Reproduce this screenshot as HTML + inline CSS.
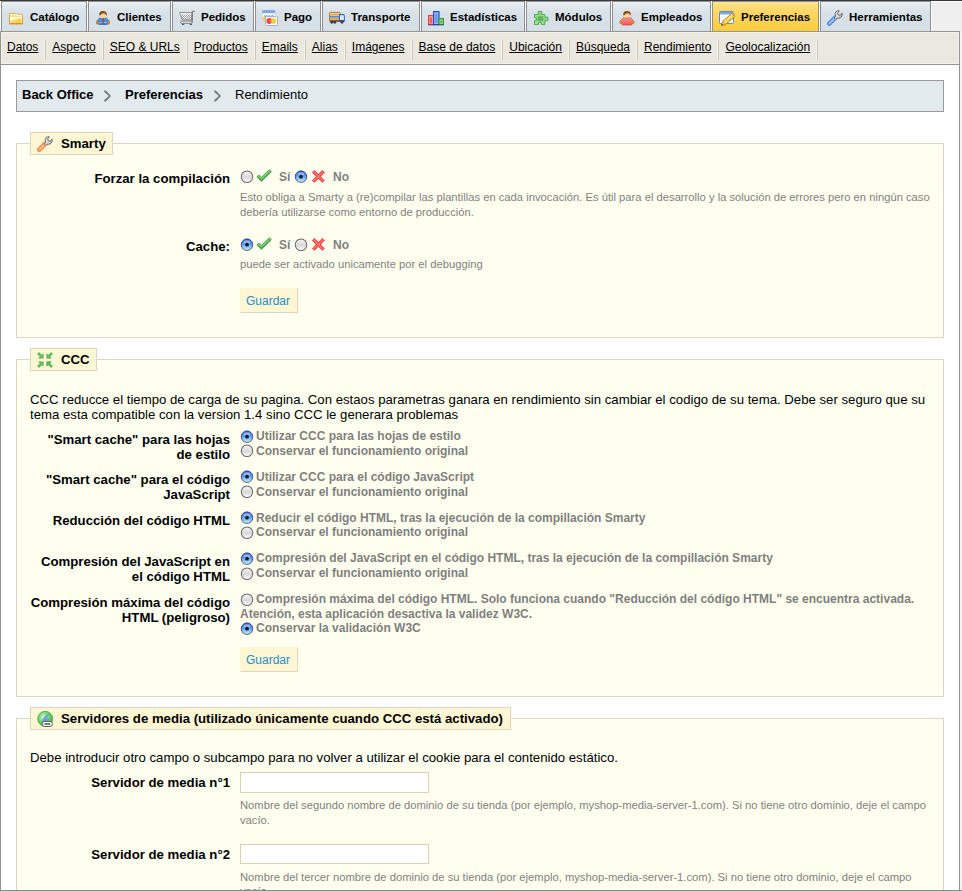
<!DOCTYPE html>
<html><head><meta charset="utf-8">
<style>
*{box-sizing:border-box}
html,body{margin:0;padding:0}
body{width:962px;height:891px;overflow:hidden;position:relative;background:#efefef;font-family:"Liberation Sans",sans-serif;color:#000}
.a{position:absolute}
#topline{left:0;top:0;width:962px;height:1px;background:#3a3a3a}
#tabrow{left:0;top:1px;width:962px;height:1px;background:#fff}
#tabwhite{left:0;top:1px;width:932px;height:30px;background:#fff}
.tab{position:absolute;top:1px;height:30px;border:1px solid #8f8f8f;border-bottom:0;background:linear-gradient(#eef3f6 0px,#e2e9ee 4px,#d7e1e7 12px,#d5e0e6 30px)}
.tab.on{background:linear-gradient(#fde590 0px,#fdd86a 8px,#fecd38 30px);border-color:#8f8f8f}
.tab svg{position:absolute;left:6px;top:8px}
.tab span{position:absolute;left:28px;top:8px;font-size:11.5px;font-weight:bold;line-height:14px;white-space:nowrap}
#sub{left:0;top:31px;width:960px;height:34px;border:1px solid #959595;background:#ebe9df;box-shadow:inset 1px 1px 0 #f4f2e8,inset -1px -1px 0 #f4f2e8}
#sub ul{margin:0;padding:0;list-style:none;position:absolute;left:0;top:0;white-space:nowrap}
#sub li{float:left;padding:0 7px 0 6px;border-right:1px solid #c8c6be;box-shadow:-1px 0 0 #f5f3ea inset;margin-top:8px;height:20px;font-size:12px;line-height:15px;padding-top:0px}
#sub li:last-child{}
#sub a{color:#000;text-decoration:underline}
#content{left:0;top:65px;width:960px;height:826px;border-left:1px solid #939393;border-right:1px solid #939393;background:#fff}
#bottomline{left:0;top:890px;width:962px;height:1px;background:#8a8a8a}
#rstrip{left:960px;top:32px;width:1px;height:858px;background:#f5f5f5}
#path{left:16px;top:80px;width:928px;height:32px;border:1px solid #9a9a9a;background:#e2eaee;font-size:13px;line-height:16px}
#path span{position:absolute;top:6px;white-space:nowrap}
fieldset.f{position:absolute;left:16px;width:928px;margin:0;padding:0;border:1px solid #dfd5c3;background:#fffff0}
.lg{position:absolute;left:30px;height:23px;border:1px solid #dfd5c3;background:#fff6d3;font-size:13.2px;font-weight:bold;line-height:16px}
.lg svg{position:absolute;left:6px;top:3px}
.lg span{position:absolute;left:30px;top:3px;white-space:nowrap}
.lbl{position:absolute;left:30px;width:200px;text-align:right;font-size:13.2px;font-weight:bold;line-height:15px;white-space:nowrap}
.desc{position:absolute;left:240px;font-size:11.22px;color:#7f7f7f;line-height:15px;white-space:nowrap}
.opt{position:absolute;left:256px;font-size:12px;font-weight:bold;color:#7f7f7f;line-height:15px;white-space:nowrap}
.yn{position:absolute;font-size:12px;font-weight:bold;color:#7f7f7f;line-height:15px}
.txt{position:absolute;left:30px;font-size:13.2px;line-height:15px;white-space:nowrap}
.rd{position:absolute;width:14px;height:14px}
.rd svg{display:block}
.btn{position:absolute;left:240px;width:58px;height:25px;background:#fff6d3;border:1px solid;border-color:#fff6d3 #dfd5c3 #dfd5c3 #fff6d3;color:#268ccd;font-size:12px;line-height:15px}
.btn span{position:absolute;left:5px;top:5px}
.inp{position:absolute;left:240px;width:189px;height:21px;border:1px solid #e0d0b1;background:#fff}
.ic{position:absolute}
</style></head><body>
<div class="a" id="topline"></div>
<div class="a" id="tabwhite"></div><div class="a" id="tabrow"></div>

<div class="tab" style="left:1px;width:86px"><svg width="16" height="16" viewBox="0 0 16 16"><defs><linearGradient id="gF1_1" x1="0" y1="0" x2="0" y2="1"><stop offset="0" stop-color="#e2b038"/><stop offset="1" stop-color="#e48a2c"/></linearGradient><linearGradient id="gF2_1" x1="0" y1="0" x2="1" y2="1"><stop offset="0" stop-color="#fbeda0"/><stop offset="1" stop-color="#eec50a"/></linearGradient></defs><path d="M1.5 3.5H8.2L8.9 4.3H14.3L14.5 4.6V13.6H1.5Z" fill="#fffef4" stroke="url(#gF1_1)" stroke-width="1"/><path d="M1.2 13.2H14.8V14.4H1.2Z" fill="#e2862e"/><path d="M2.6 5H7.6L8.4 6H13V7.2H2.6Z" fill="#f8de78"/><path d="M2.6 12.8V9.8H5.6L7 8.4H13.4V12.8Z" fill="url(#gF2_1)"/></svg><span>Catálogo</span></div>
<div class="tab" style="left:88px;width:83px"><svg width="16" height="16" viewBox="0 0 16 16"><defs><linearGradient id="gC1_1" x1="0" y1="0" x2="0" y2="1"><stop offset="0" stop-color="#5a9ad8"/><stop offset="1" stop-color="#3a78c0"/></linearGradient></defs><path d="M3.5 8.5Q4.5 7 6 7H10Q11.5 7 12.5 8.5L15 11.5V13.5H13L12.5 15H3.5L3 13.5H1V11.5Z" fill="url(#gC1_1)"/><path d="M1 11.2H3.2V14.2H1Z M12.8 11.2H15V14.2H12.8Z" fill="#e08428"/><path d="M4.6 3.5Q4.6 1 8 1Q11.5 1 11.6 3.6V6.5Q11 8 8 8Q5 8 4.6 6.5Z" fill="#fcd7a4"/><path d="M4.2 5Q4 1 8 1Q12 1 11.9 5L11.3 5.4Q10.8 3.6 9 3.2Q7 3 5 5.4Z" fill="#8a4a14"/><path d="M7.6 8H8.8L9.2 11L8.2 12.2L7.3 11Z" fill="#d83a30"/><path d="M4 12.5H7M9 12.5H12" stroke="#a9cdf0" stroke-width=".8"/></svg><span>Clientes</span></div>
<div class="tab" style="left:172px;width:82px"><svg width="16" height="16" viewBox="0 0 16 16"><defs><pattern id="gCk_1" width="2" height="2" patternUnits="userSpaceOnUse"><rect width="2" height="2" fill="#efefef"/><rect width="1" height="1" fill="#a4a4a4"/><rect x="1" y="1" width="1" height="1" fill="#a4a4a4"/></pattern></defs><path d="M0.6 2.6H13V9.9H3.3Z" fill="url(#gCk_1)" stroke="#8c8c8c" stroke-width="1"/><path d="M1.3 3.2H12.5V4.4H1.7Z" fill="#fbfbfb"/><path d="M13.2 12.4V2.2L14.1 1.3H15.7" fill="none" stroke="#767676" stroke-width="1.2"/><rect x="1.5" y="11.1" width="11.8" height="2.3" rx="1.1" fill="none" stroke="#888" stroke-width="1"/><path d="M3 14.4H5.2M10.8 14.4H13" stroke="#555" stroke-width="1.3"/></svg><span>Pedidos</span></div>
<div class="tab" style="left:255px;width:66px"><svg width="16" height="16" viewBox="0 0 16 16"><defs><linearGradient id="gP1_1" x1="0" y1="0" x2="0" y2="1"><stop offset="0" stop-color="#6e9bd6"/><stop offset="1" stop-color="#8db6e6"/></linearGradient></defs><rect x="0.5" y="0.5" width="12.5" height="9.5" rx="1" fill="#fff" stroke="#c9c9c9" stroke-width=".6"/><rect x="0.3" y="0.3" width="12.9" height="3" fill="url(#gP1_1)"/><path d="M2.5 5.3L3.3 7.2L4.5 5.3M6 5.3V7.2M8 5.3Q7 5.6 7.4 6.2Q8.3 6.7 7.2 7.2M9.3 7.2L10.2 5.2L11 7.2" fill="none" stroke="#3a64b8" stroke-width=".8"/><rect x="0.3" y="7.2" width="4" height="2.6" fill="#f0cc50"/><rect x="3.5" y="6.5" width="12" height="9" rx="1.2" fill="#fcfcfc" stroke="#a8a8a8" stroke-width=".9"/><circle cx="7.3" cy="11" r="2.9" fill="#f04848"/><circle cx="11.4" cy="11" r="2.9" fill="#f2cf58"/><path d="M9.4 8.9A2.9 2.9 0 0 1 9.4 13.1A2.9 2.9 0 0 1 9.4 8.9Z" fill="#f59a4a"/></svg><span>Pago</span></div>
<div class="tab" style="left:322px;width:98px"><svg width="16" height="16" viewBox="0 0 16 16"><defs><linearGradient id="gT1_1" x1="0" y1="0" x2="0" y2="1"><stop offset="0" stop-color="#f2d3a0"/><stop offset="1" stop-color="#e8a858"/></linearGradient></defs><rect x="0.5" y="2.4" width="10.6" height="8.4" rx=".8" fill="url(#gT1_1)" stroke="#b87a38" stroke-width="1"/><path d="M1.5 4.6H10.5M1.5 8.6H10.5" stroke="#d09450" stroke-width=".7"/><rect x="1" y="6" width="10" height="1.4" fill="#4a8ee0"/><path d="M10.5 4.6H14Q15.3 4.8 15.3 6V10.6H10.5Z" fill="#fff" stroke="#2f63c0" stroke-width="1.1"/><rect x="11.6" y="5.8" width="2.6" height="4" fill="#d8e8fa"/><path d="M0.5 10.6H15.5V11.6H0.5Z" fill="#1e2a3c"/><circle cx="2.8" cy="12.3" r="1.4" fill="#3a3a3a"/><circle cx="5.8" cy="12.3" r="1.4" fill="#3a3a3a"/><circle cx="13" cy="12.3" r="1.4" fill="#3a3a3a"/></svg><span>Transporte</span></div>
<div class="tab" style="left:421px;width:104px"><svg width="16" height="16" viewBox="0 0 16 16"><rect x="0.6" y="5.6" width="4.8" height="9" fill="#ffb0a8" stroke="#f03a34" stroke-width="1.2"/><rect x="2" y="7.5" width="2" height="6" fill="#ff5a50"/><rect x="5.6" y="1.6" width="5.4" height="13" fill="#9cc0f0" stroke="#1a4ee0" stroke-width="1.2"/><rect x="7" y="3.5" width="2.6" height="9.5" fill="#6a9ee8"/><rect x="11" y="8.6" width="4.4" height="6" fill="#b4e0a4" stroke="#2e9a2e" stroke-width="1.2"/><rect x="12.3" y="10.3" width="1.8" height="3" fill="#5aae5a"/><path d="M0 14.5H16V15.2H0Z" fill="#1a2a7a" opacity=".7"/></svg><span>Estadísticas</span></div>
<div class="tab" style="left:526px;width:85px"><svg width="16" height="16" viewBox="0 0 16 16"><path d="M1.5 4.5H5.2V1.5H8.8V4.5H11.8V7.2H14.8V10.8H11.8V14.5H8.4V12.4H5.6V14.5H1.5V10.4H3.6V7.9H1.5Z" fill="#9ddc98" stroke="#4cae4c" stroke-width="1"/><path d="M4.6 6.2H10.4V11.2H4.6Z" fill="#5cb85a"/><path d="M6.2 2.8H7.8V5.2H6.2ZM11 8.5H13.6V9.6H11Z" fill="#78c874"/></svg><span>Módulos</span></div>
<div class="tab" style="left:612px;width:99px"><svg width="16" height="16" viewBox="0 0 16 16"><defs><linearGradient id="gE1_1" x1="0" y1="0" x2="0" y2="1"><stop offset="0" stop-color="#ff9a90"/><stop offset="1" stop-color="#f05858"/></linearGradient></defs><path d="M3.5 8.5Q4.5 7 6 7H10Q11.5 7 12.5 8.5L15 11.5V13.5H13L12.5 15H3.5L3 13.5H1V11.5Z" fill="url(#gE1_1)" stroke="#d04040" stroke-width=".7"/><path d="M1 11.2H3.2V14.2H1Z M12.8 11.2H15V14.2H12.8Z" fill="#e08428"/><path d="M4.6 3.5Q4.6 1 8 1Q11.5 1 11.6 3.6V6.5Q11 8 8 8Q5 8 4.6 6.5Z" fill="#fcd7a4"/><path d="M4.2 5Q4 1 8 1Q12 1 11.9 5L11.3 5.4Q10.8 3.6 9 3.2Q7 3 5 5.4Z" fill="#8a4a14"/><path d="M6 8.2H10" stroke="#c86a40" stroke-width=".8"/></svg><span>Empleados</span></div>
<div class="tab on" style="left:712px;width:107px"><svg width="16" height="16" viewBox="0 0 16 16"><defs><linearGradient id="gR1_1" x1="0" y1="0" x2="0" y2="1"><stop offset="0" stop-color="#6f9fe0"/><stop offset="1" stop-color="#8fb8ee"/></linearGradient></defs><rect x="0.5" y="1.5" width="14" height="12" rx="1" fill="#fff" stroke="#5a8ad8" stroke-width="1"/><rect x="1" y="2" width="13" height="2.6" fill="url(#gR1_1)"/><path d="M2.6 15.4L3.6 11.6L12.6 3.6L15.6 6.6L6.6 14.6Z" fill="#f4d850" stroke="#c47e1c" stroke-width="1"/><path d="M4.6 12.6L13.4 4.6" stroke="#fff4a8" stroke-width=".9"/><path d="M2.6 15.4L3.6 11.6L6.6 14.6Z" fill="#f8d8a8" stroke="#c47e1c" stroke-width=".6"/><path d="M2.5 15.5L3 13.7L4.4 15Z" fill="#2a2a2a"/><path d="M12.6 3.6L15.6 6.6L16 6.2Q16 4.6 14.6 3.2Q13.4 2.4 13 3.2Z" fill="#f0b0a0" stroke="#c47e1c" stroke-width=".6"/></svg><span>Preferencias</span></div>
<div class="tab" style="left:820px;width:111px"><svg width="16" height="16" viewBox="0 0 16 16"><defs><linearGradient id="gW1_1" x1="0" y1="0" x2="1" y2="0"><stop offset="0" stop-color="#f4f4f4"/><stop offset="1" stop-color="#b8b8b8"/></linearGradient></defs><path d="M2.3 13.7L8.3 7.7" stroke="#5c8ee2" stroke-width="4.6" stroke-linecap="round"/><path d="M2.6 13.4L8 8" stroke="#a4c4f4" stroke-width="1.6" stroke-linecap="round" stroke-dasharray="1.2 .7"/><path d="M7.2 8L8.6 6.6Q7.6 3.2 9 1.6Q10.2 0.6 12.4 0.8L10.6 3L11.2 4.8L13 5.3L15.2 3.2Q15.6 6.2 13.6 7.6Q12 8.6 9.6 8.2L8.4 9.4Z" fill="url(#gW1_1)" stroke="#6a6a6a" stroke-width="1"/></svg><span>Herramientas</span></div>

<div class="a" id="sub"><ul>
<li><a>Datos</a></li><li><a>Aspecto</a></li><li><a>SEO &amp; URLs</a></li><li><a>Productos</a></li><li><a>Emails</a></li><li><a>Alias</a></li><li><a>Imágenes</a></li><li><a>Base de datos</a></li><li><a>Ubicación</a></li><li><a>Búsqueda</a></li><li><a>Rendimiento</a></li><li><a>Geolocalización</a></li>
</ul></div>

<div class="a" id="content"></div>
<div class="a" id="rstrip"></div>
<div class="a" id="bottomline"></div>

<div class="a" id="path">
<span style="left:5px;font-weight:bold">Back Office</span>
<svg class="ic" style="left:86px;top:9px" width="10" height="13" viewBox="0 0 10 13"><path d="M1.2 0.4H2.9L8.1 6L2.9 11.6H1.2V10L5.7 6L1.2 2Z" fill="#7e7e7e"/></svg>
<span style="left:108px;font-weight:bold">Preferencias</span>
<svg class="ic" style="left:196px;top:9px" width="10" height="13" viewBox="0 0 10 13"><path d="M1.2 0.4H2.9L8.1 6L2.9 11.6H1.2V10L5.7 6L1.2 2Z" fill="#7e7e7e"/></svg>
<span style="left:218px">Rendimiento</span>
</div>

<!-- SMARTY -->
<fieldset class="f" style="top:143px;height:195px"></fieldset>
<div class="lg" style="top:132px;width:83px"><svg width="16" height="16" viewBox="0 0 16 16"><defs><linearGradient id="gW2_1" x1="0" y1="0" x2="1" y2="0"><stop offset="0" stop-color="#f4f4f4"/><stop offset="1" stop-color="#b8b8b8"/></linearGradient></defs><path d="M2.3 13.7L8.3 7.7" stroke="#ff8a4c" stroke-width="4.6" stroke-linecap="round"/><path d="M2.6 13.4L8 8" stroke="#ffc09a" stroke-width="1.6" stroke-linecap="round" stroke-dasharray="1.2 .7"/><path d="M7.2 8L8.6 6.6Q7.6 3.2 9 1.6Q10.2 0.6 12.4 0.8L10.6 3L11.2 4.8L13 5.3L15.2 3.2Q15.6 6.2 13.6 7.6Q12 8.6 9.6 8.2L8.4 9.4Z" fill="url(#gW2_1)" stroke="#6a6a6a" stroke-width="1"/></svg><span>Smarty</span></div>
<div class="lbl" style="top:171px">Forzar la compilación</div>
<div class="rd" style="left:240px;top:170px"><svg width="14" height="14" viewBox="0 0 14 14"><defs><linearGradient id="gRG_1" x1="0" y1="0" x2="0" y2="1"><stop offset="0" stop-color="#f6f6f6"/><stop offset=".55" stop-color="#d8d8d8"/><stop offset="1" stop-color="#ffffff"/></linearGradient></defs><circle cx="7" cy="6.7" r="5.75" fill="url(#gRG_1)" stroke="#6a6a6a" stroke-width="1.05"/></svg></div>
<div class="ic" style="left:256px;top:168px"><svg width="16" height="16" viewBox="0 0 16 16"><path d="M1.8 7.6L5.4 11.4L14.6 2.6" fill="none" stroke="#3a9a3a" stroke-width="3.4" stroke-linejoin="miter"/><path d="M2.2 7.6L5.4 10.8L14.2 2.6" fill="none" stroke="#82d07e" stroke-width="1.5"/></svg></div>
<div class="yn" style="left:279px;top:170px">Sí</div>
<div class="rd" style="left:294px;top:170px"><svg width="14" height="14" viewBox="0 0 14 14"><defs><linearGradient id="gRB_1" x1="0" y1="0" x2="0" y2="1"><stop offset="0" stop-color="#2a62c8"/><stop offset=".45" stop-color="#5f9de6"/><stop offset="1" stop-color="#c8f4ff"/></linearGradient><linearGradient id="gRS_1" x1="0" y1="0" x2="0" y2="1"><stop offset="0" stop-color="#27309a"/><stop offset="1" stop-color="#5a6478"/></linearGradient></defs><circle cx="7" cy="6.7" r="5.75" fill="url(#gRB_1)" stroke="url(#gRS_1)" stroke-width="1"/><ellipse cx="7" cy="3.9" rx="3.4" ry="1.7" fill="#fff" opacity=".4"/><circle cx="7" cy="6.7" r="1.85" fill="#121c30"/></svg></div>
<div class="ic" style="left:310px;top:168px"><svg width="16" height="16" viewBox="0 0 16 16"><path d="M3.2 3.2L13.6 13.6M13.6 3.2L3.2 13.6" fill="none" stroke="#f23a3a" stroke-width="3.4"/><path d="M3.6 3.6L13.2 13.2M13.2 3.6L3.6 13.2" fill="none" stroke="#ff7a7a" stroke-width="1.4"/></svg></div>
<div class="yn" style="left:333px;top:170px">No</div>
<div class="desc" style="top:190px">Esto obliga a Smarty a (re)compilar las plantillas en cada invocación. Es útil para el desarrollo y la solución de errores pero en ningún caso</div>
<div class="desc" style="top:205px">debería utilizarse como entorno de producción.</div>

<div class="lbl" style="top:239px">Cache:</div>
<div class="rd" style="left:240px;top:238px"><svg width="14" height="14" viewBox="0 0 14 14"><defs><linearGradient id="gRB_2" x1="0" y1="0" x2="0" y2="1"><stop offset="0" stop-color="#2a62c8"/><stop offset=".45" stop-color="#5f9de6"/><stop offset="1" stop-color="#c8f4ff"/></linearGradient><linearGradient id="gRS_2" x1="0" y1="0" x2="0" y2="1"><stop offset="0" stop-color="#27309a"/><stop offset="1" stop-color="#5a6478"/></linearGradient></defs><circle cx="7" cy="6.7" r="5.75" fill="url(#gRB_2)" stroke="url(#gRS_2)" stroke-width="1"/><ellipse cx="7" cy="3.9" rx="3.4" ry="1.7" fill="#fff" opacity=".4"/><circle cx="7" cy="6.7" r="1.85" fill="#121c30"/></svg></div>
<div class="ic" style="left:256px;top:236px"><svg width="16" height="16" viewBox="0 0 16 16"><path d="M1.8 7.6L5.4 11.4L14.6 2.6" fill="none" stroke="#3a9a3a" stroke-width="3.4" stroke-linejoin="miter"/><path d="M2.2 7.6L5.4 10.8L14.2 2.6" fill="none" stroke="#82d07e" stroke-width="1.5"/></svg></div>
<div class="yn" style="left:279px;top:238px">Sí</div>
<div class="rd" style="left:294px;top:238px"><svg width="14" height="14" viewBox="0 0 14 14"><defs><linearGradient id="gRG_2" x1="0" y1="0" x2="0" y2="1"><stop offset="0" stop-color="#f6f6f6"/><stop offset=".55" stop-color="#d8d8d8"/><stop offset="1" stop-color="#ffffff"/></linearGradient></defs><circle cx="7" cy="6.7" r="5.75" fill="url(#gRG_2)" stroke="#6a6a6a" stroke-width="1.05"/></svg></div>
<div class="ic" style="left:310px;top:236px"><svg width="16" height="16" viewBox="0 0 16 16"><path d="M3.2 3.2L13.6 13.6M13.6 3.2L3.2 13.6" fill="none" stroke="#f23a3a" stroke-width="3.4"/><path d="M3.6 3.6L13.2 13.2M13.2 3.6L3.6 13.2" fill="none" stroke="#ff7a7a" stroke-width="1.4"/></svg></div>
<div class="yn" style="left:333px;top:238px">No</div>
<div class="desc" style="top:257px">puede ser activado unicamente por el debugging</div>
<div class="btn" style="top:288px"><span>Guardar</span></div>

<!-- CCC -->
<fieldset class="f" style="top:359px;height:338px"></fieldset>
<div class="lg" style="top:348px;width:67px"><svg width="16" height="16" viewBox="0 0 16 16"><g stroke-linecap="butt"><g><path d="M1 1L5 5" stroke="#62bc62" stroke-width="2.6"/><path d="M1.2 6.5H6.5V1.2Z" fill="#48a848"/><path d="M3 5.5H5.5V3Z" fill="#8ed08a"/></g></g><g transform="translate(16 0) scale(-1 1)"><path d="M1 1L5 5" stroke="#62bc62" stroke-width="2.6"/><path d="M1.2 6.5H6.5V1.2Z" fill="#48a848"/><path d="M3 5.5H5.5V3Z" fill="#8ed08a"/></g><g transform="translate(0 16) scale(1 -1)"><path d="M1 1L5 5" stroke="#62bc62" stroke-width="2.6"/><path d="M1.2 6.5H6.5V1.2Z" fill="#48a848"/><path d="M3 5.5H5.5V3Z" fill="#8ed08a"/></g><g transform="translate(16 16) scale(-1 -1)"><path d="M1 1L5 5" stroke="#62bc62" stroke-width="2.6"/><path d="M1.2 6.5H6.5V1.2Z" fill="#3e9e3e"/><path d="M3 5.5H5.5V3Z" fill="#7cc478"/></g></svg><span>CCC</span></div>
<div class="txt" style="top:392px">CCC reducce el tiempo de carga de su pagina. Con estaos parametras ganara en rendimiento sin cambiar el codigo de su tema. Debe ser seguro que su</div>
<div class="txt" style="top:407px">tema esta compatible con la version 1.4 sino CCC le generara problemas</div>

<div class="lbl" style="top:432px">"Smart cache" para las hojas<br>de estilo</div>
<div class="rd" style="left:240px;top:430px"><svg width="14" height="14" viewBox="0 0 14 14"><defs><linearGradient id="gRB_3" x1="0" y1="0" x2="0" y2="1"><stop offset="0" stop-color="#2a62c8"/><stop offset=".45" stop-color="#5f9de6"/><stop offset="1" stop-color="#c8f4ff"/></linearGradient><linearGradient id="gRS_3" x1="0" y1="0" x2="0" y2="1"><stop offset="0" stop-color="#27309a"/><stop offset="1" stop-color="#5a6478"/></linearGradient></defs><circle cx="7" cy="6.7" r="5.75" fill="url(#gRB_3)" stroke="url(#gRS_3)" stroke-width="1"/><ellipse cx="7" cy="3.9" rx="3.4" ry="1.7" fill="#fff" opacity=".4"/><circle cx="7" cy="6.7" r="1.85" fill="#121c30"/></svg></div><div class="opt" style="top:429px">Utilizar CCC para las hojas de estilo</div>
<div class="rd" style="left:240px;top:444px"><svg width="14" height="14" viewBox="0 0 14 14"><defs><linearGradient id="gRG_3" x1="0" y1="0" x2="0" y2="1"><stop offset="0" stop-color="#f6f6f6"/><stop offset=".55" stop-color="#d8d8d8"/><stop offset="1" stop-color="#ffffff"/></linearGradient></defs><circle cx="7" cy="6.7" r="5.75" fill="url(#gRG_3)" stroke="#6a6a6a" stroke-width="1.05"/></svg></div><div class="opt" style="top:444px">Conservar el funcionamiento original</div>

<div class="lbl" style="top:472px">"Smart cache" para el código<br>JavaScript</div>
<div class="rd" style="left:240px;top:470px"><svg width="14" height="14" viewBox="0 0 14 14"><defs><linearGradient id="gRB_4" x1="0" y1="0" x2="0" y2="1"><stop offset="0" stop-color="#2a62c8"/><stop offset=".45" stop-color="#5f9de6"/><stop offset="1" stop-color="#c8f4ff"/></linearGradient><linearGradient id="gRS_4" x1="0" y1="0" x2="0" y2="1"><stop offset="0" stop-color="#27309a"/><stop offset="1" stop-color="#5a6478"/></linearGradient></defs><circle cx="7" cy="6.7" r="5.75" fill="url(#gRB_4)" stroke="url(#gRS_4)" stroke-width="1"/><ellipse cx="7" cy="3.9" rx="3.4" ry="1.7" fill="#fff" opacity=".4"/><circle cx="7" cy="6.7" r="1.85" fill="#121c30"/></svg></div><div class="opt" style="top:470px">Utilizar CCC para el código JavaScript</div>
<div class="rd" style="left:240px;top:485px"><svg width="14" height="14" viewBox="0 0 14 14"><defs><linearGradient id="gRG_4" x1="0" y1="0" x2="0" y2="1"><stop offset="0" stop-color="#f6f6f6"/><stop offset=".55" stop-color="#d8d8d8"/><stop offset="1" stop-color="#ffffff"/></linearGradient></defs><circle cx="7" cy="6.7" r="5.75" fill="url(#gRG_4)" stroke="#6a6a6a" stroke-width="1.05"/></svg></div><div class="opt" style="top:485px">Conservar el funcionamiento original</div>

<div class="lbl" style="top:513px">Reducción del código HTML</div>
<div class="rd" style="left:240px;top:511px"><svg width="14" height="14" viewBox="0 0 14 14"><defs><linearGradient id="gRB_5" x1="0" y1="0" x2="0" y2="1"><stop offset="0" stop-color="#2a62c8"/><stop offset=".45" stop-color="#5f9de6"/><stop offset="1" stop-color="#c8f4ff"/></linearGradient><linearGradient id="gRS_5" x1="0" y1="0" x2="0" y2="1"><stop offset="0" stop-color="#27309a"/><stop offset="1" stop-color="#5a6478"/></linearGradient></defs><circle cx="7" cy="6.7" r="5.75" fill="url(#gRB_5)" stroke="url(#gRS_5)" stroke-width="1"/><ellipse cx="7" cy="3.9" rx="3.4" ry="1.7" fill="#fff" opacity=".4"/><circle cx="7" cy="6.7" r="1.85" fill="#121c30"/></svg></div><div class="opt" style="top:511px">Reducir el código HTML, tras la ejecución de la compillación Smarty</div>
<div class="rd" style="left:240px;top:526px"><svg width="14" height="14" viewBox="0 0 14 14"><defs><linearGradient id="gRG_5" x1="0" y1="0" x2="0" y2="1"><stop offset="0" stop-color="#f6f6f6"/><stop offset=".55" stop-color="#d8d8d8"/><stop offset="1" stop-color="#ffffff"/></linearGradient></defs><circle cx="7" cy="6.7" r="5.75" fill="url(#gRG_5)" stroke="#6a6a6a" stroke-width="1.05"/></svg></div><div class="opt" style="top:525px">Conservar el funcionamiento original</div>

<div class="lbl" style="top:554px">Compresión del JavaScript en<br>el código HTML</div>
<div class="rd" style="left:240px;top:552px"><svg width="14" height="14" viewBox="0 0 14 14"><defs><linearGradient id="gRB_6" x1="0" y1="0" x2="0" y2="1"><stop offset="0" stop-color="#2a62c8"/><stop offset=".45" stop-color="#5f9de6"/><stop offset="1" stop-color="#c8f4ff"/></linearGradient><linearGradient id="gRS_6" x1="0" y1="0" x2="0" y2="1"><stop offset="0" stop-color="#27309a"/><stop offset="1" stop-color="#5a6478"/></linearGradient></defs><circle cx="7" cy="6.7" r="5.75" fill="url(#gRB_6)" stroke="url(#gRS_6)" stroke-width="1"/><ellipse cx="7" cy="3.9" rx="3.4" ry="1.7" fill="#fff" opacity=".4"/><circle cx="7" cy="6.7" r="1.85" fill="#121c30"/></svg></div><div class="opt" style="top:551px">Compresión del JavaScript en el código HTML, tras la ejecución de la compillación Smarty</div>
<div class="rd" style="left:240px;top:567px"><svg width="14" height="14" viewBox="0 0 14 14"><defs><linearGradient id="gRG_6" x1="0" y1="0" x2="0" y2="1"><stop offset="0" stop-color="#f6f6f6"/><stop offset=".55" stop-color="#d8d8d8"/><stop offset="1" stop-color="#ffffff"/></linearGradient></defs><circle cx="7" cy="6.7" r="5.75" fill="url(#gRG_6)" stroke="#6a6a6a" stroke-width="1.05"/></svg></div><div class="opt" style="top:566px">Conservar el funcionamiento original</div>

<div class="lbl" style="top:595px">Compresión máxima del código<br>HTML (peligroso)</div>
<div class="rd" style="left:240px;top:593px"><svg width="14" height="14" viewBox="0 0 14 14"><defs><linearGradient id="gRG_7" x1="0" y1="0" x2="0" y2="1"><stop offset="0" stop-color="#f6f6f6"/><stop offset=".55" stop-color="#d8d8d8"/><stop offset="1" stop-color="#ffffff"/></linearGradient></defs><circle cx="7" cy="6.7" r="5.75" fill="url(#gRG_7)" stroke="#6a6a6a" stroke-width="1.05"/></svg></div><div class="opt" style="top:592px">Compresión máxima del código HTML. Solo funciona cuando "Reducción del código HTML" se encuentra activada.</div>
<div class="opt" style="top:607px;left:240px">Atención, esta aplicación desactiva la validez W3C.</div>
<div class="rd" style="left:240px;top:622px"><svg width="14" height="14" viewBox="0 0 14 14"><defs><linearGradient id="gRB_7" x1="0" y1="0" x2="0" y2="1"><stop offset="0" stop-color="#2a62c8"/><stop offset=".45" stop-color="#5f9de6"/><stop offset="1" stop-color="#c8f4ff"/></linearGradient><linearGradient id="gRS_7" x1="0" y1="0" x2="0" y2="1"><stop offset="0" stop-color="#27309a"/><stop offset="1" stop-color="#5a6478"/></linearGradient></defs><circle cx="7" cy="6.7" r="5.75" fill="url(#gRB_7)" stroke="url(#gRS_7)" stroke-width="1"/><ellipse cx="7" cy="3.9" rx="3.4" ry="1.7" fill="#fff" opacity=".4"/><circle cx="7" cy="6.7" r="1.85" fill="#121c30"/></svg></div><div class="opt" style="top:621px">Conservar la validación W3C</div>
<div class="btn" style="top:647px"><span>Guardar</span></div>

<!-- MEDIA -->
<fieldset class="f" style="top:718px;height:200px"></fieldset>
<div class="lg" style="top:707px;width:481px"><svg width="16" height="16" viewBox="0 0 16 16"><defs><radialGradient id="gG1_1" cx=".42" cy=".4" r=".6"><stop offset="0" stop-color="#e6f8e6"/><stop offset=".55" stop-color="#7ad47a"/><stop offset="1" stop-color="#3cae44"/></radialGradient></defs><circle cx="8.2" cy="7.8" r="7.5" fill="url(#gG1_1)" stroke="#4cb84c" stroke-width=".9"/><path d="M4.6 11Q6 6.5 8.6 4.2Q10.2 2.8 12.6 3Q10.6 5.6 9.4 7.2Q11.4 6.8 13 7.8Q10.6 9.6 8.2 10.8Z" fill="#5a9ed8" opacity=".9"/><rect x="5.2" y="10.4" width="10.2" height="5" rx="2.3" fill="#ffffff" stroke="#555" stroke-width="1"/><rect x="7.4" y="12" width="5.8" height="1.8" rx=".9" fill="#3c3c3c"/><path d="M8.4 12.9H12.2" stroke="#e8e8e8" stroke-width=".6"/></svg><span>Servidores de media (utilizado únicamente cuando CCC está activado)</span></div>
<div class="txt" style="top:750px">Debe introducir otro campo o subcampo para no volver a utilizar el cookie para el contenido estático.</div>
<div class="lbl" style="top:775px">Servidor de media n°1</div>
<div class="inp" style="top:772px"></div>
<div class="desc" style="top:798px">Nombre del segundo nombre de dominio de su tienda (por ejemplo, myshop-media-server-1.com). Si no tiene otro dominio, deje el campo</div>
<div class="desc" style="top:813px">vacío.</div>
<div class="lbl" style="top:847px">Servidor de media n°2</div>
<div class="inp" style="top:844px;height:20px"></div>
<div class="desc" style="top:870px">Nombre del tercer nombre de dominio de su tienda (por ejemplo, myshop-media-server-1.com). Si no tiene otro dominio, deje el campo</div>
<div class="desc" style="top:884px">vacío.</div>
<div class="a" id="bottomline2" style="left:0;top:890px;width:962px;height:1px;background:#8a8a8a"></div>
</body></html>
